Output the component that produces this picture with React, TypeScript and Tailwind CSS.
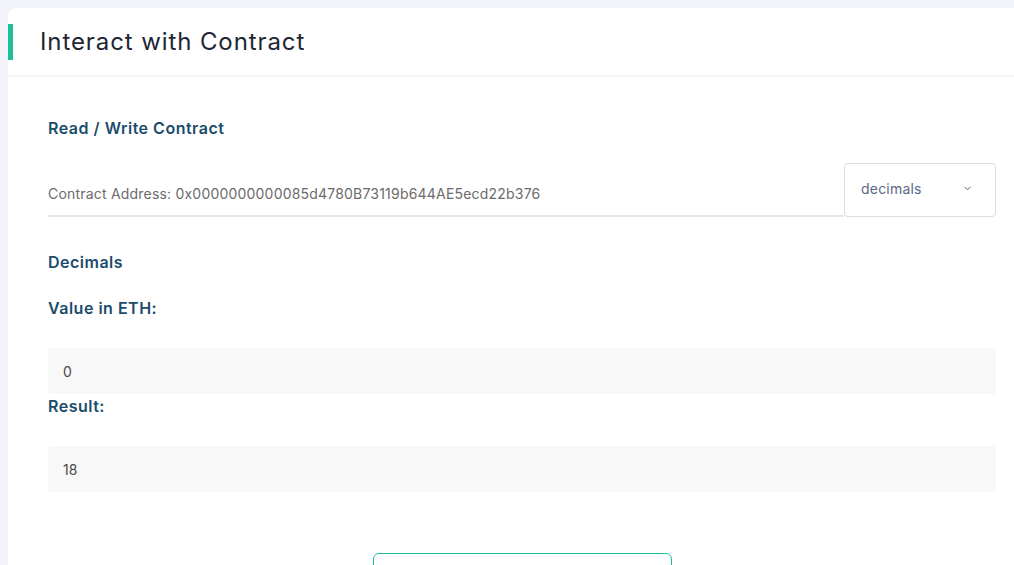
import { ChevronDown } from 'lucide-react'

const font = { fontFamily: 'Inter, "Open Sans", sans-serif' }

function Label({ children, className = '' }: { children: React.ReactNode; className?: string }) {
  return (
    <div className={`text-[16px] leading-6 font-semibold tracking-[0.5px] text-[#1b4c6b] ${className}`}>{children}</div>
  )
}

function ValueBox({ value, className = '' }: { value: string; className?: string }) {
  return (
    <div className={`h-[46px] rounded bg-[#f8f8f8] px-[15px] flex items-center text-[14px] text-[#4a4a4a] ${className}`}>
      {value}
    </div>
  )
}

export default function App() {
  return (
    <div className="min-h-screen bg-[#f2f3f8] pl-2 pt-2 overflow-hidden" style={font}>
      <div className="bg-white rounded-tl-lg rounded-bl-lg min-h-[600px]">
        <div className="h-[69px] flex items-center border-b-2 border-[#f5f6f8]">
          <div className="w-[5px] h-9 bg-[#1cbf9c]" />
          <h1 className="ml-[27px] text-[24px] font-normal text-[#1e2633] tracking-[0.9px]">Interact with Contract</h1>
        </div>

        <div className="pl-10 pr-[18px]">
          <Label className="mt-[39px]">Read / Write Contract</Label>

          <div className="mt-[23px] flex items-stretch">
            <div className="flex-1 h-[54px] flex items-end">
              <div className="w-full border-b-2 border-[#e6e6e6] pb-[11px] text-[14px] tracking-[0.2px] text-[#6b6b6b]">
                Contract Address: 0x0000000000085d4780B73119b644AE5ecd22b376
              </div>
            </div>
            <div className="w-[152px] h-[54px] border border-[#dcdcdc] rounded flex items-center justify-between pl-4 pr-[22px] pb-[4px]">
              <span className="text-[14px] tracking-[0.2px] text-[#5b6987]">decimals</span>
              <ChevronDown size={11} strokeWidth={2} className="text-[#555]" />
            </div>
          </div>

          <Label className="mt-[33px]">Decimals</Label>
          <Label className="mt-[22px]">Value in ETH:</Label>
          <ValueBox value="0" className="mt-[28px]" />
          <Label>Result:</Label>
          <ValueBox value="18" className="mt-[28px]" />

          <div className="mt-[61px] flex justify-center">
            <button aria-label="Read" className="w-[299px] h-[44px] border border-[#1cbf9c] rounded-md" />
          </div>
        </div>
      </div>
    </div>
  )
}
